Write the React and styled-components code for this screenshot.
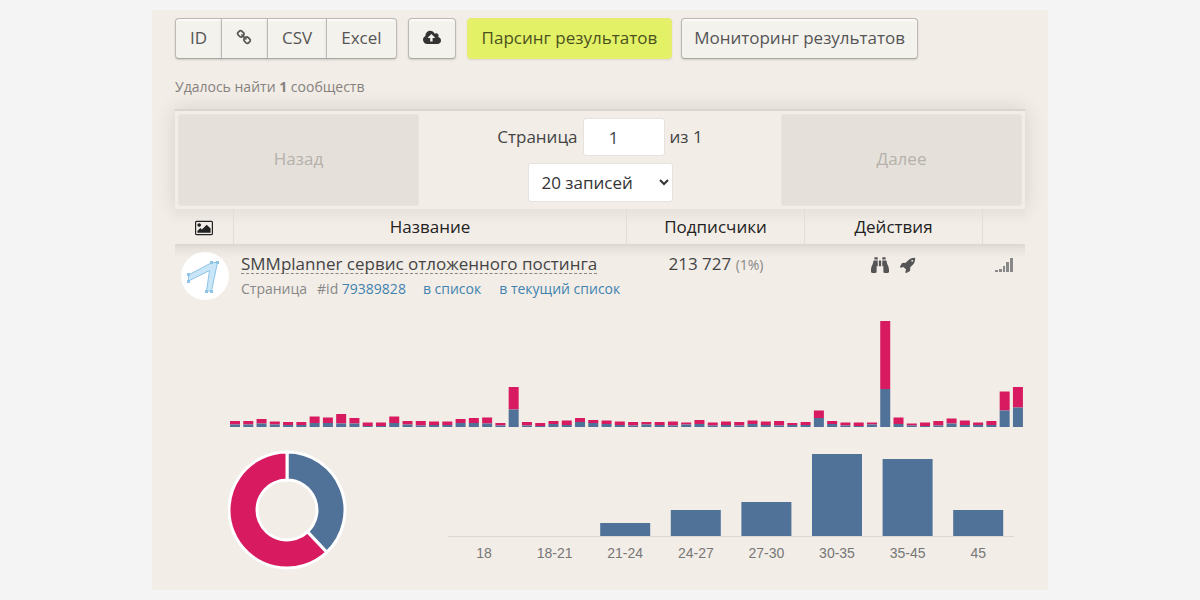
import React from 'react';
import styled, { createGlobalStyle } from 'styled-components';
import { FaBinoculars } from 'react-icons/fa';

const BLUE = '#507299';
const PINK = '#d81b60';

const GlobalStyle = createGlobalStyle`
  * {
    box-sizing: border-box;
  }
  body {
    margin: 0;
    background: #f4f4f4;
    color: #444;
    font-family: "Open Sans", "Noto Sans", sans-serif;
    font-size: 17px;
    line-height: 24px;
  }
  button, input, select {
    font: inherit;
    color: inherit;
  }
`;

const Page = styled.div`
  padding: 10px;
`;

const Card = styled.main`
  max-width: 896px;
  margin: 0 auto;
  padding: 8px 23px 20px;
  background: #f2ede7;
`;

const Toolbar = styled.div`
  display: flex;
  flex-wrap: wrap;
`;

const Button = styled.button`
  display: inline-flex;
  align-items: center;
  justify-content: center;
  height: 41px;
  padding: 0 14px 2px;
  border: 1px solid ${p => (p.$active ? '#e6ee6c' : '#bbb9b5')};
  border-bottom-color: ${p => (p.$active ? '#e6ee6c' : '#a9a8a4')};
  border-radius: 4px;
  background: ${p => (p.$active ? '#e2f165' : '#f4f2ed')};
  box-shadow: ${p => (p.$active
    ? 'inset 0 0 6px #ecf074, 0 1px 2px rgba(0,0,0,0.1)'
    : 'inset 0 2px 1px #fbfaf8, 0 1px 2px rgba(0,0,0,0.15)')};
  color: ${p => (p.$active ? '#4c5121' : '#555')};
  white-space: nowrap;
  cursor: pointer;
`;

const ButtonGroup = styled.div`
  display: flex;
  margin-right: 11px;

  ${Button} {
    border-radius: 0;
    margin-left: -1px;
  }
  ${Button}:first-child {
    border-radius: 4px 0 0 4px;
    margin-left: 0;
  }
  ${Button}:last-child {
    border-radius: 0 4px 4px 0;
  }
`;

const UploadButton = styled(Button)`
  margin-right: 11px;
  color: #333;
`;

const ParseButton = styled(Button)`
  margin-right: 9px;
`;

const MonitorButton = styled(Button)`
  padding: 0 12px 2px;
`;

const Found = styled.p`
  margin: 16px 0 10px;
  color: #85827e;
  font-size: 14px;
`;

const Pager = styled.nav`
  display: grid;
  grid-template-columns: 241fr 362fr 241fr;
  padding: 3px;
  height: 100px;
  border-top: 2px solid #d9d5cf;
  background: #f2ede7;
  box-shadow: 0 0 20px rgba(0,0,0,0.12);
`;

const PageButton = styled.button`
  padding-bottom: 4px;
  border: 1px solid #e7e3dd;
  border-radius: 3px;
  background: #e5e0da;
  color: #b5b1ab;
`;

const PagerCenter = styled.div`
  display: flex;
  flex-direction: column;
  align-items: center;
  gap: 7px;
  padding-top: 4px;
`;

const PageLabel = styled.label`
  display: flex;
  align-items: center;
  gap: 5px;
`;

const PageInput = styled.input`
  width: 82px;
  height: 38px;
  padding: 0 15px 0 10px;
  border: 1px solid #e6e3df;
  border-radius: 3px;
  background: #fff;
  text-align: center;
`;

const SizeSelect = styled.select`
  width: 145px;
  height: 39px;
  padding: 0 0 0 9px;
  border: 1px solid #e6e3df;
  border-radius: 3px;
  background: #fff;
  color: #333;
`;

const Table = styled.table`
  width: 100%;
  table-layout: fixed;
  border-collapse: separate;
  border-spacing: 0;
`;

const Head = styled.th`
  width: ${p => p.$width};
  height: 35px;
  padding: 0;
  border-right: 1px solid #e2ddd6;
  background: linear-gradient(#e7e2dc, #f2ede7 16px);
  color: #222;
  font-weight: 400;
  line-height: 20px;

  &:last-child {
    border-right: 0;
  }
`;

const Cell = styled.td`
  height: 61px;
  padding: 8px ${p => (p.$avatar ? 0 : 7)}px 0;
  background: linear-gradient(#dcd7d0, #e8e3dd 5px, #f2ede7 14px);
  text-align: ${p => p.$align || 'left'};
  vertical-align: top;
`;

const Avatar = styled.svg`
  display: block;
  width: 48px;
  height: 48px;
  margin: 0 auto;
`;

const Title = styled.a`
  display: inline-block;
  border-bottom: 1px dashed #8b8782;
  color: #444;
  line-height: 19px;
  text-decoration: none;
  white-space: nowrap;
`;

const Meta = styled.div`
  display: flex;
  margin-top: 2px;
  color: #888;
  font-size: 14px;
  line-height: 22px;
  white-space: nowrap;

  a {
    color: #3f83b0;
    text-decoration: none;
  }
`;

const MetaItem = styled.span`
  margin-right: ${p => p.$space}px;
`;

const Percent = styled.small`
  color: #888;
  font-size: 14px;
`;

const IconButton = styled.button`
  padding: 0;
  margin: 0 5px;
  border: 0;
  background: none;
  color: #555;
  line-height: 0;
  vertical-align: middle;
`;

const StatButton = styled(IconButton)`
  color: #888;
`;

const Glyph = styled.svg`
  display: inline-block;
  width: ${p => p.$size || 18}px;
  height: ${p => p.$size || 18}px;
  fill: currentColor;
  vertical-align: middle;
`;

const Charts = styled.section`
  padding: 13px 0 0 53px;
`;

const Activity = styled.svg`
  display: block;
  width: 100%;
`;

const ChartRow = styled.div`
  display: flex;
  gap: 100px;
  padding: 22px 11px 0 0;
`;

const Donut = styled.svg`
  flex: none;
  width: 120px;
  height: 120px;
`;

const Ages = styled.svg`
  flex: 1;
  min-width: 0;
  height: 120px;

  text {
    fill: #777;
    font-family: "Liberation Sans", Arial, sans-serif;
    font-size: 14px;
    text-anchor: middle;
  }
`;

const paths = {
  link: 'M1456 1216q0-40-28-68l-208-208q-28-28-68-28-42 0-72 32 3 3 19 18.5t21.5 21.5 15 19 13 25.5 3.5 27.5q0 40-28 68t-68 28q-15 0-27.5-3.5t-25.5-13-19-15-21.5-21.5-18.5-19q-33 31-33 73 0 40 28 68l206 207q27 27 68 27 40 0 68-26l147-146q28-28 28-67zm-703-705q0-40-28-68l-206-207q-28-28-68-28-39 0-68 27l-147 146q-28 28-28 67 0 40 28 68l208 208q27 27 68 27 42 0 72-31-3-3-19-18.5t-21.5-21.5-15-19-13-25.5-3.5-27.5q0-40 28-68t68-28q15 0 27.5 3.5t25.5 13 19 15 21.5 21.5 18.5 19q33-31 33-73zm895 705q0 120-85 203l-147 146q-83 83-203 83-121 0-204-85l-206-207q-83-83-83-203 0-123 88-209l-88-88q-86 88-208 88-120 0-204-84l-208-208q-84-84-84-204t85-203l147-146q83-83 203-83 121 0 204 85l206 207q83 83 83 203 0 123-88 209l88 88q86-88 208-88 120 0 204 84l208 208q84 84 84 204z',
  upload: 'M1216 864q0-14-9-23l-352-352q-9-9-23-9t-23 9l-351 351q-10 12-10 24 0 14 9 23t23 9h224v352q0 13 9.5 22.5t22.5 9.5h192q13 0 22.5-9.5t9.5-22.5v-352h224q13 0 22.5-9.5t9.5-22.5zm640 288q0 159-112.5 271.5t-271.5 112.5h-1088q-185 0-316.5-131.5t-131.5-316.5q0-130 70-240t188-165q-2-30-2-43 0-212 150-362t362-150q156 0 285.5 87t188.5 231q71-62 166-62 106 0 181 75t75 181q0 76-41 138 130 31 213.5 135.5t83.5 238.5z',
  picture: 'M576 576q0 80-56 136t-136 56-136-56-56-136 56-136 136-56 136 56 56 136zm1024 384v448h-1408v-192l320-320 160 160 512-512zm96-704h-1600q-13 0-22.5 9.5t-9.5 22.5v1216q0 13 9.5 22.5t22.5 9.5h1600q13 0 22.5-9.5t9.5-22.5v-1216q0-13-9.5-22.5t-22.5-9.5zm160 32v1216q0 66-47 113t-113 47h-1600q-66 0-113-47t-47-113v-1216q0-66 47-113t113-47h1600q66 0 113 47t47 113z',
  rocket: 'M1440 448q0-40-28-68t-68-28-68 28-28 68 28 68 68 28 68-28 28-68zm224-288q0 249-75.5 430.5t-253.5 360.5q-81 80-195 176l-20 379q-2 16-16 26l-384 224q-7 4-16 4-12 0-23-9l-64-64q-13-14-8-32l85-276-281-281-276 85q-3 1-9 1-14 0-23-9l-64-64q-17-19-5-39l224-384q10-14 26-16l379-20q96-114 176-195 188-187 358-258t431-71q14 0 24 9.5t10 22.5z',
};

const Icon = ({ name, size }) => (
  <Glyph $size={size} viewBox="-64 -64 1920 1920" aria-hidden="true">
    <path d={paths[name]} />
  </Glyph>
);

// [total, male] per bar
const activity = [
  [6, 2.5], [6, 2.5], [8, 3.5], [5.5, 2.5], [5, 2], [5, 2], [10.5, 4], [9.5, 4], [13, 3.5], [9, 3.5],
  [4.5, 1], [4.5, 1], [10.5, 4], [6, 2.5], [6, 1.5], [5.5, 2], [5.5, 2], [8, 4], [9, 4], [9.5, 3.5],
  [4, 1.5], [40, 17.5], [5, 1.5], [4, 1], [6, 3], [6.5, 2], [9, 5], [7, 4], [6.5, 3], [5.5, 2],
  [5, 1.5], [5, 2.5], [5, 2], [5.5, 1.5], [4.5, 2.5], [7, 3], [4.5, 1.5], [5.5, 2], [5, 1.5], [6.5, 3],
  [5.5, 2], [6, 1.5], [4, 2], [5, 2], [16.5, 9], [6, 3], [4.5, 1.5], [4.5, 1], [4.5, 2.5], [106, 38],
  [9.5, 3], [3.5, 1.5], [4.5, 1], [6, 1.5], [8.5, 3.5], [6.5, 2], [4.5, 2], [6, 2], [35.5, 16.5], [40, 19.5],
];

const ages = [
  ['18', 0], ['18-21', 0], ['21-24', 13], ['24-27', 26],
  ['27-30', 34], ['30-35', 82], ['35-45', 77], ['45', 26],
];

const ActivityChart = () => (
  <Activity viewBox="0 0 797 110" role="img" aria-label="Активность">
    {activity.map(([total, male], i) => {
      const x = 2 + i * 13.27;
      return (
        <g key={i}>
          <rect x={x} y={109 - total} width="10" height={total - male} fill={PINK} />
          <rect x={x} y={109 - male} width="10" height={male} fill={BLUE} />
        </g>
      );
    })}
  </Activity>
);

const slice = (from, to) => {
  const pt = (r, t) => {
    const a = t * 2 * Math.PI;
    return `${r * Math.sin(a)} ${-r * Math.cos(a)}`;
  };
  const large = to - from > 0.5 ? 1 : 0;
  return `M${pt(58, from)}A58 58 0 ${large} 1 ${pt(58, to)}L${pt(30, to)}A30 30 0 ${large} 0 ${pt(30, from)}Z`;
};

const GenderChart = () => (
  <Donut viewBox="-59 -60 120 120" role="img" aria-label="Пол">
    <g stroke="#fff" strokeWidth="3">
      <path d={slice(0, 0.38)} fill={BLUE} />
      <path d={slice(0.38, 1)} fill={PINK} />
    </g>
  </Donut>
);

const AgeChart = () => (
  <Ages viewBox="0 0 566 120" role="img" aria-label="Возраст">
    <rect x="0" y="86" width="566" height="1" fill="#dcd8d2" />
    {ages.map(([label, h], i) => {
      const mid = 36 + i * 70.6;
      return (
        <g key={label}>
          <rect x={mid - 25} y={86 - h} width="50" height={h} fill={BLUE} />
          <text x={mid} y="108">{label}</text>
        </g>
      );
    })}
  </Ages>
);

const Logo = () => (
  <Avatar viewBox="0 0 48 48" role="img" aria-label="SMMplanner">
    <circle cx="24" cy="24" r="24" fill="#fff" />
    <path d="M7.5 23L31 10.5H36.5L30.5 39H25.5L28.5 18.5L7.5 29Z" fill="#c9e5f8" stroke="#8fc4e6" />
    <g fill="#8fc4e6">
      <rect x="6" y="21" width="3" height="3" />
      <rect x="6" y="28" width="3" height="3" />
      <rect x="29" y="9" width="3" height="3" />
      <rect x="35" y="9" width="3" height="3" />
      <rect x="24" y="38" width="3" height="3" />
      <rect x="29" y="38" width="3" height="3" />
    </g>
  </Avatar>
);

const App = () => (
  <Page>
    <GlobalStyle />
    <Card>
      <Toolbar>
        <ButtonGroup>
          <Button>ID</Button>
          <Button aria-label="Ссылка"><Icon name="link" size={17} /></Button>
          <Button>CSV</Button>
          <Button>Excel</Button>
        </ButtonGroup>
        <UploadButton aria-label="Загрузить"><Icon name="upload" /></UploadButton>
        <ParseButton $active>Парсинг результатов</ParseButton>
        <MonitorButton>Мониторинг результатов</MonitorButton>
      </Toolbar>

      <Found>Удалось найти <b>1</b> сообществ</Found>

      <Pager>
        <PageButton disabled>Назад</PageButton>
        <PagerCenter>
          <PageLabel>
            Страница
            <PageInput type="number" defaultValue="1" />
            из 1
          </PageLabel>
          <SizeSelect aria-label="Записей на странице">
            <option>20 записей</option>
          </SizeSelect>
        </PagerCenter>
        <PageButton disabled>Далее</PageButton>
      </Pager>

      <Table>
        <thead>
          <tr>
            <Head $width="59px"><Icon name="picture" /></Head>
            <Head>Название</Head>
            <Head $width="178px">Подписчики</Head>
            <Head $width="178px">Действия</Head>
            <Head $width="42px" />
          </tr>
        </thead>
        <tbody>
          <tr>
            <Cell $avatar><Logo /></Cell>
            <Cell>
              <Title href="#">SMMplanner сервис отложенного постинга</Title>
              <Meta>
                <MetaItem $space={10}>Страница</MetaItem>
                <MetaItem $space={17}>#id <a href="#">79389828</a></MetaItem>
                <MetaItem $space={18}><a href="#">в список</a></MetaItem>
                <a href="#">в текущий список</a>
              </Meta>
            </Cell>
            <Cell $align="center">213 727 <Percent>(1%)</Percent></Cell>
            <Cell $align="center">
              <IconButton aria-label="Просмотр"><Glyph as={FaBinoculars} /></IconButton>
              <IconButton aria-label="Запуск"><Icon name="rocket" /></IconButton>
            </Cell>
            <Cell $align="center">
              <StatButton aria-label="Статистика">
                <Glyph viewBox="0 0 18 18">
                  <path d="M0 14h3v2H0zM4 13h3v3H4zM8 10h2v6H8zM11 6h3v10h-3zM15 2h3v14h-3z" />
                </Glyph>
              </StatButton>
            </Cell>
          </tr>
        </tbody>
      </Table>

      <Charts>
        <ActivityChart />
        <ChartRow>
          <GenderChart />
          <AgeChart />
        </ChartRow>
      </Charts>
    </Card>
  </Page>
);

export default App;
